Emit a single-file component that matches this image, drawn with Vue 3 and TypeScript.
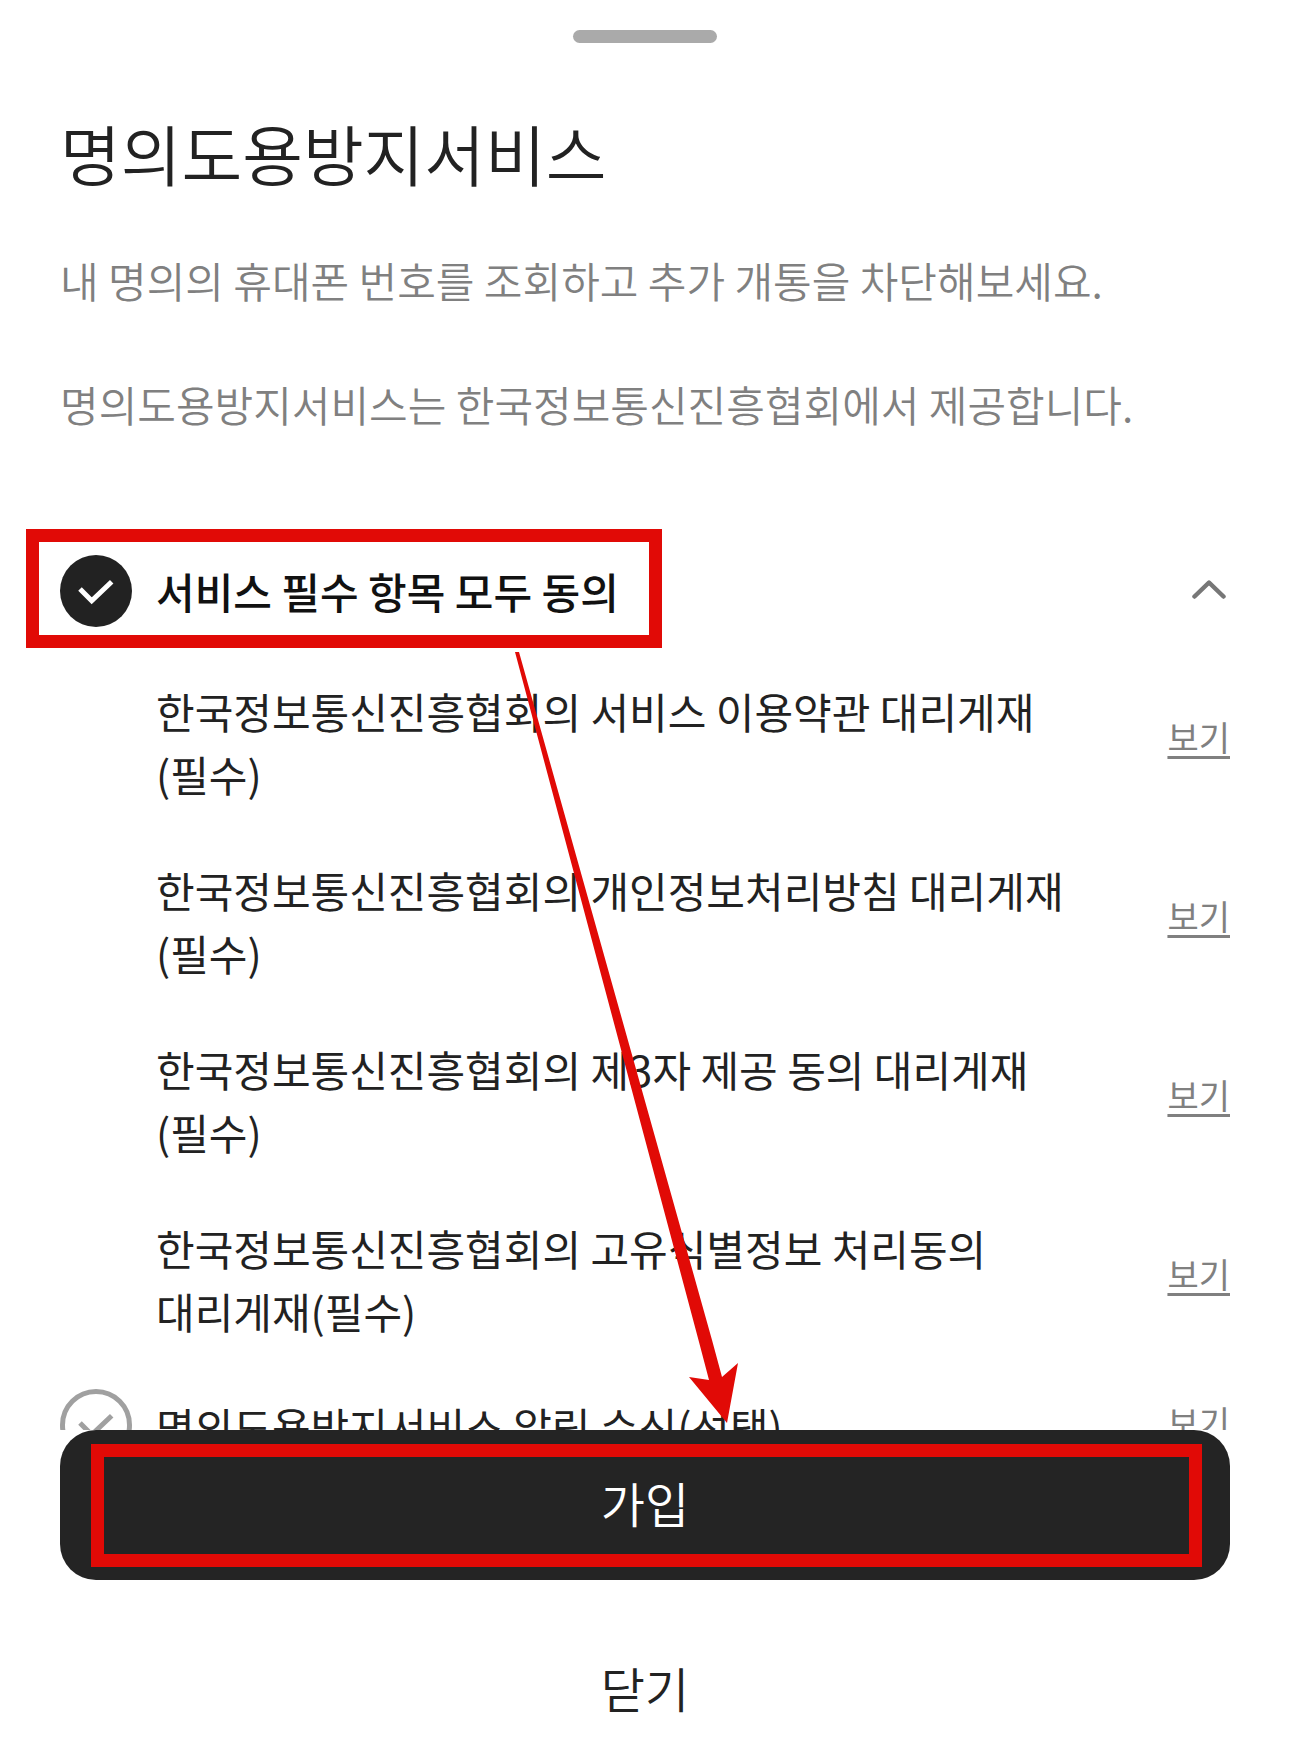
<script setup lang="ts">
interface Term { lines: string[] }
const terms: Term[] = [
  { lines: ['한국정보통신진흥협회의 서비스 이용약관 대리게재', '(필수)'] },
  { lines: ['한국정보통신진흥협회의 개인정보처리방침 대리게재', '(필수)'] },
  { lines: ['한국정보통신진흥협회의 제3자 제공 동의 대리게재', '(필수)'] },
  { lines: ['한국정보통신진흥협회의 고유식별정보 처리동의', '대리게재(필수)'] },
]
</script>

<template>
  <div class="sheet">
    <div class="handle"></div>
    <h1 class="title">명의도용방지서비스</h1>
    <p class="desc first">내 명의의 휴대폰 번호를 조회하고 추가 개통을 차단해보세요.</p>
    <p class="desc second">명의도용방지서비스는 한국정보통신진흥협회에서 제공합니다.</p>

    <div class="list">
      <div class="all-row">
        <svg class="tick" viewBox="0 0 72 72">
          <circle cx="36" cy="36" r="36" fill="#222" />
          <path d="M20 34 L31.7 45.7 L51.7 26.7" fill="none" stroke="#fff" stroke-width="5" />
        </svg>
        <span class="all-label">서비스 필수 항목 모두 동의</span>
        <svg class="chevron" viewBox="0 0 34 19">
          <path d="M2.5 16.5 L17 2.5 L31.5 16.5" fill="none" stroke="#777" stroke-width="4.5" stroke-linecap="round" stroke-linejoin="round" />
        </svg>
      </div>

      <div v-for="(t, i) in terms" :key="i" class="term">
        <div class="term-text">
          <div v-for="l in t.lines" :key="l">{{ l }}</div>
        </div>
        <a class="view">보기</a>
      </div>

      <div class="optional">
        <svg class="tick" viewBox="0 0 72 72">
          <circle cx="36" cy="36" r="33.5" fill="none" stroke="#a0a0a0" stroke-width="5" />
          <path d="M20 34 L31.7 45.7 L51.7 26.7" fill="none" stroke="#a0a0a0" stroke-width="5" />
        </svg>
        <span class="optional-label">명의도용방지서비스 알림 수신(선택)</span>
        <a class="view">보기</a>
      </div>
    </div>

    <button class="join">가입</button>
    <div class="close">닫기</div>

    <svg class="marks" viewBox="0 0 1290 1751">
      <rect x="32.5" y="535.5" width="623" height="106" fill="none" stroke="#e10a06" stroke-width="13" />
      <rect x="97.5" y="1450.5" width="1098" height="110" fill="none" stroke="#e10a06" stroke-width="13" />
      <polygon points="515,652 519,652 712,1340 722,1377 738,1363 727,1423 689,1377 709,1380 699,1342" fill="#e10a06" />
    </svg>
  </div>
</template>

<style scoped>
.sheet {
  position: relative;
  width: 1290px;
  height: 1751px;
  box-sizing: border-box;
  padding: 30px 60px 0;
  display: flex;
  flex-direction: column;
  overflow: hidden;
  background: #fff;
  font-family: "Noto Sans CJK KR", "Noto Sans", sans-serif;
}
.handle {
  flex: none;
  align-self: center;
  width: 144px;
  height: 13px;
  border-radius: 7px;
  background: #aaa;
}
.title {
  margin: 69px 0 0;
  font-size: 66px;
  line-height: 80px;
  font-weight: 350;
  color: #222;
}
.desc {
  margin: 0;
  font-size: 42px;
  line-height: 60px;
  font-weight: 350;
  color: #808080;
  white-space: nowrap;
}
.first { margin-top: 58px; }
.second { margin-top: 64px; }
.list {
  flex: none;
  height: 875px;
  margin-top: 121px;
  overflow: hidden;
  display: flex;
  flex-direction: column;
}
.all-row {
  flex: none;
  height: 72px;
  display: flex;
  align-items: center;
}
.tick {
  flex: none;
  width: 72px;
  height: 72px;
}
.all-label {
  margin-left: 24px;
  font-size: 42px;
  font-weight: 500;
  color: #111;
  position: relative;
  top: -1px;
}
.chevron {
  width: 34px;
  height: 19px;
  margin-left: auto;
  margin-right: 4px;
  position: relative;
  top: -2px;
}
.term {
  flex: none;
  height: 126px;
  margin-top: 52px;
  padding-left: 96px;
  display: flex;
  align-items: center;
  justify-content: space-between;
  font-size: 42px;
  line-height: 63px;
  color: #222;
}
.term + .term { margin-top: 53px; }
.term-text { white-space: nowrap; }
.view {
  font-size: 34px;
  line-height: 40px;
  color: #808080;
  text-decoration: underline;
  text-underline-offset: 5px;
  position: relative;
  top: -3px;
}
.term .view { top: -5px; }
.optional {
  flex: none;
  height: 72px;
  margin-top: 47px;
  display: flex;
  align-items: center;
}
.optional-label {
  margin-left: 24px;
  font-size: 42px;
  color: #222;
}
.optional .view { margin-left: auto; }
.join {
  flex: none;
  width: 100%;
  height: 150px;
  padding: 0 0 6px;
  border: 0;
  border-radius: 36px;
  background: #242424;
  color: #fff;
  font: inherit;
  font-size: 48px;
  font-weight: 350;
}
.close {
  flex: none;
  margin-top: 67px;
  text-align: center;
  font-size: 48px;
  line-height: 80px;
  font-weight: 350;
  color: #222;
}
.marks {
  position: absolute;
  left: 0;
  top: 0;
  width: 1290px;
  height: 1751px;
  pointer-events: none;
}
</style>
